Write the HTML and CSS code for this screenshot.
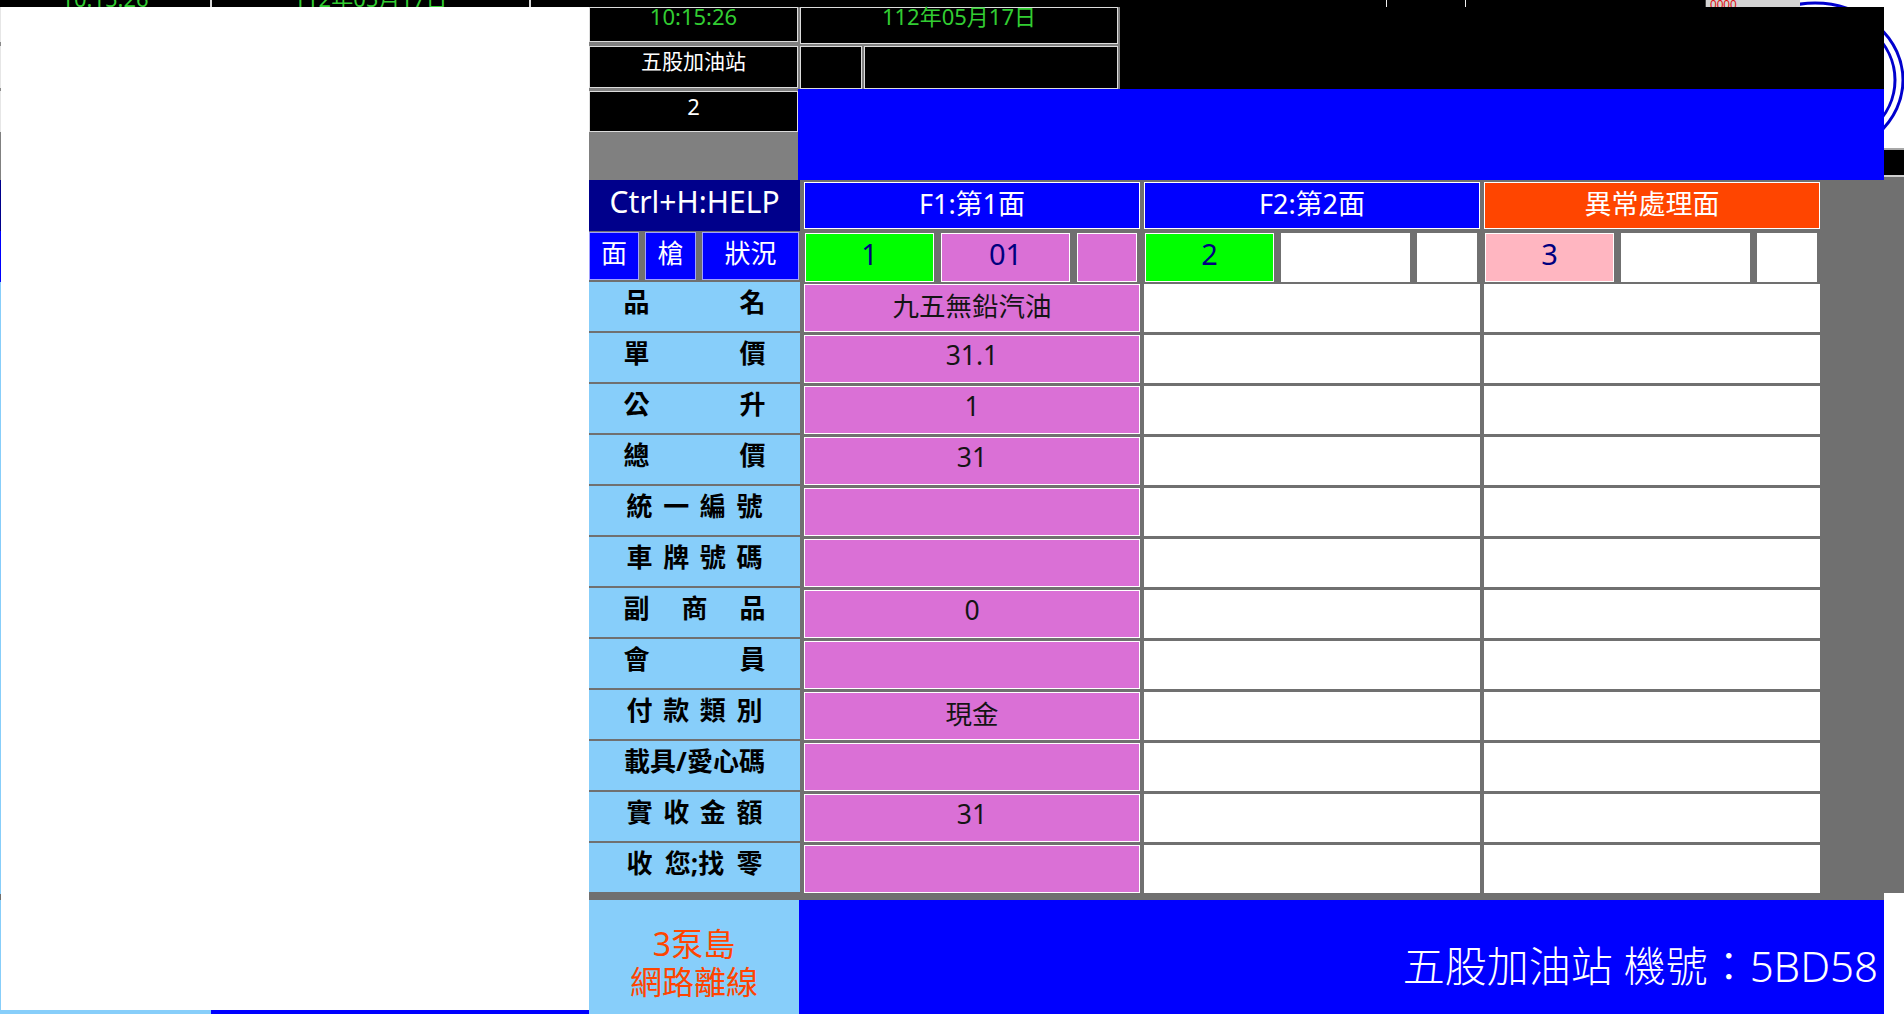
FILE: index.html
```html
<!DOCTYPE html>
<html lang="zh-Hant">
<head>
<meta charset="utf-8">
<title>加油站 POS</title>
<link rel="stylesheet" href="styles.css">
</head>
<body>
<div class="desk">

  <!-- window at the right edge (partly hidden) -->
  <div class="side-win">
    <div class="side-logo">
      <svg class="rings" width="104" height="148" viewBox="0 0 104 148">
        <ellipse cx="15" cy="80" rx="88" ry="77" fill="none" stroke="#0000cd" stroke-width="3"/>
        <ellipse cx="15" cy="80" rx="80" ry="69" fill="none" stroke="#0000cd" stroke-width="3"/>
      </svg>
    </div>
    <div class="side-line"></div>
    <div class="side-black"></div>
    <div class="side-sep"></div>
    <div class="side-grey"></div>
    <div class="side-white"></div>
  </div>

  <!-- background window top strip -->
  <div class="bg-top">
    <div class="bgc bgc-a"><span class="bg-green">10:15:26</span></div>
    <div class="bgd"></div>
    <div class="bgc bgc-b"><span class="bg-green">112年05月17日</span></div>
    <div class="bgd"></div>
    <div class="bgc bgc-c"></div>
    <div class="bgd thin"></div>
    <div class="bgc bgc-d"></div>
    <div class="bgd thin"></div>
    <div class="bgc bgc-e"></div>
    <div class="bgd thin dark"></div>
    <div class="bgc bgc-f"><span class="red-num">0000</span></div>
  </div>
  <div class="bg-left"></div>
  <div class="bg-bottom"><div class="bgb-a"></div><div class="bgb-b"></div></div>

  <!-- blank white window -->
  <div class="blank"></div>

  <!-- main POS window -->
  <div class="win">
    <div class="top">
      <div class="top-left">
        <div class="tcell time">10:15:26</div>
        <div class="tcell station">五股加油站</div>
        <div class="tcell num">2</div>
      </div>
      <div class="top-right">
        <div class="tr-upper">
          <div class="tgrid">
            <div class="tcell date">112年05月17日</div>
            <div class="tsub">
              <div class="tcell tsmall"></div>
              <div class="tcell twide"></div>
            </div>
          </div>
          <div class="tblack"></div>
        </div>
        <div class="tr-lower"></div>
      </div>
    </div>

    <div class="grid">
      <div class="help">Ctrl+H:HELP</div>
      <div class="face-h">F1:第1面</div>
      <div class="face-h">F2:第2面</div>
      <div class="face-h err">異常處理面</div>

      <div class="keys">
        <div class="key k1">面</div>
        <div class="key k2">槍</div>
        <div class="key k3">狀況</div>
      </div>
      <div class="subs">
        <div class="sub green">1</div>
        <div class="sub pink">01</div>
        <div class="sub pink"></div>
      </div>
      <div class="subs">
        <div class="sub green">2</div>
        <div class="sub white"></div>
        <div class="sub white"></div>
      </div>
      <div class="subs">
        <div class="sub lpink">3</div>
        <div class="sub white"></div>
        <div class="sub white"></div>
      </div>

      <div class="lab"><div class="lt"><span>品</span><span>名</span></div></div>
      <div class="val">九五無鉛汽油</div><div class="val w"></div><div class="val w"></div>

      <div class="lab"><div class="lt"><span>單</span><span>價</span></div></div>
      <div class="val">31.1</div><div class="val w"></div><div class="val w"></div>

      <div class="lab"><div class="lt"><span>公</span><span>升</span></div></div>
      <div class="val">1</div><div class="val w"></div><div class="val w"></div>

      <div class="lab"><div class="lt"><span>總</span><span>價</span></div></div>
      <div class="val">31</div><div class="val w"></div><div class="val w"></div>

      <div class="lab"><div class="lt lt4"><span>統</span><span>一</span><span>編</span><span>號</span></div></div>
      <div class="val"></div><div class="val w"></div><div class="val w"></div>

      <div class="lab"><div class="lt lt4"><span>車</span><span>牌</span><span>號</span><span>碼</span></div></div>
      <div class="val"></div><div class="val w"></div><div class="val w"></div>

      <div class="lab"><div class="lt"><span>副</span><span>商</span><span>品</span></div></div>
      <div class="val">0</div><div class="val w"></div><div class="val w"></div>

      <div class="lab"><div class="lt"><span>會</span><span>員</span></div></div>
      <div class="val"></div><div class="val w"></div><div class="val w"></div>

      <div class="lab"><div class="lt lt4"><span>付</span><span>款</span><span>類</span><span>別</span></div></div>
      <div class="val">現金</div><div class="val w"></div><div class="val w"></div>

      <div class="lab"><div class="lt ltn"><span>載具/愛心碼</span></div></div>
      <div class="val"></div><div class="val w"></div><div class="val w"></div>

      <div class="lab"><div class="lt lt4"><span>實</span><span>收</span><span>金</span><span>額</span></div></div>
      <div class="val">31</div><div class="val w"></div><div class="val w"></div>

      <div class="lab"><div class="lt lt4"><span>收</span><span>您;找</span><span>零</span></div></div>
      <div class="val"></div><div class="val w"></div><div class="val w"></div>
    </div>

    <div class="band"></div>

    <div class="bottom">
      <div class="island"><span class="island-text">3泵島<br>網路離線</span></div>
      <div class="status">五股加油站 機號：5BD58</div>
    </div>
  </div>
</div>
</body>
</html>
```

FILE: styles.css
```css
html, body {
  margin: 0;
  padding: 0;
  background: #ffffff;
  overflow: hidden;
}

.desk {
  position: relative;
  width: 1904px;
  height: 1014px;
  overflow: hidden;
  background: #ffffff;
  font-family: "Noto Sans", "Noto Sans CJK TC", sans-serif;
}

/* ---------- right side window ---------- */
.side-win {
  position: absolute;
  left: 1800px;
  top: 0;
  width: 104px;
  height: 1014px;
  display: flex;
  flex-direction: column;
  background: #ffffff;
}
.side-logo { height: 148px; background: #ffffff; }
.rings { display: block; }
.side-line { height: 2px; background: #a8a8a8; }
.side-black { height: 25px; background: #000000; }
.side-sep { height: 2px; background: #cfcfcf; }
.side-grey { height: 716px; background: #707070; }
.side-white { flex: 1; background: #ffffff; }

/* ---------- background window fragments ---------- */
.bg-top {
  position: absolute;
  left: 0;
  top: 0;
  width: 1800px;
  height: 9px;
  display: flex;
  overflow: hidden;
  background: #000;
}
.bgc {
  height: 9px;
  background: #000;
  overflow: hidden;
  text-align: center;
}
.bgc-a { width: 210px; }
.bgc-b { width: 317px; }
.bgc-c { width: 855px; }
.bgc-d { width: 78px; }
.bgc-e { width: 239px; }
.bgc-f { width: 94px; background: #d3d3d3; text-align: left; }
.bgd { width: 2px; height: 9px; background: #d8d8d8; }
.bgd.thin { width: 1px; background: #f0f0f0; }
.bgd.dark { background: #404040; }
.bg-green {
  display: block;
  color: #32cd32;
  font-size: 22px;
  line-height: 20px;
  margin-top: -12px;
}
.red-num {
  display: block;
  color: #e01010;
  font-family: "Liberation Sans Narrow", "Liberation Sans", sans-serif;
  font-size: 12px;
  line-height: 12px;
  padding-left: 4px;
  margin-top: -1px;
}

.bg-left {
  position: absolute;
  left: 0;
  top: 7px;
  width: 1px;
  height: 1007px;
  background: linear-gradient(to bottom,
    #e6e6e6 0, #e6e6e6 35px, #8a8a8a 35px, #8a8a8a 39px,
    #e6e6e6 39px, #e6e6e6 81px, #8a8a8a 81px, #8a8a8a 84px,
    #e6e6e6 84px, #e6e6e6 125px, #808080 125px, #808080 173px,
    #00008b 173px, #00008b 224px, #0000ff 224px, #0000ff 275px,
    #87cefa 275px, #87cefa 887px, #6e6e6e 887px, #6e6e6e 893px,
    #87cefa 893px);
}
.bg-bottom {
  position: absolute;
  left: 0;
  top: 1010px;
  width: 589px;
  height: 4px;
  display: flex;
}
.bgb-a { width: 211px; background: #87cefa; }
.bgb-b { flex: 1; background: #0000ff; }

/* ---------- blank white window ---------- */
.blank {
  position: absolute;
  left: 1px;
  top: 7px;
  width: 588px;
  height: 1003px;
  background: #ffffff;
}

/* ---------- main POS window ---------- */
.win {
  position: absolute;
  left: 589px;
  top: 7px;
  width: 1295px;
  height: 1007px;
  background: #707070;
  display: flex;
  flex-direction: column;
  font-family: "Noto Sans", "Noto Sans CJK TC", sans-serif;
}

.top {
  display: flex;
  height: 173px;
  flex: none;
}
.top-left {
  width: 209px;
  background: #808080;
  display: flex;
  flex-direction: column;
}
.tcell {
  box-sizing: border-box;
  background: #000000;
  border: 1px solid #dcdcdc;
  color: #ffffff;
  font-size: 22px;
  text-align: center;
}
.time {
  height: 35px;
  color: #32cd32;
  line-height: 16px;
  padding-top: 0;
}
.station {
  height: 42px;
  margin-top: 4px;
  font-size: 21px;
  line-height: 22px;
  padding-top: 3px;
}
.num {
  height: 41px;
  margin-top: 3px;
  line-height: 22px;
  padding-top: 3px;
}

.top-right {
  width: 1086px;
  display: flex;
  flex-direction: column;
}
.tr-upper {
  height: 82px;
  display: flex;
  background: #000000;
}
.tgrid {
  box-sizing: border-box;
  width: 322px;
  padding: 0 2px;
  background: #808080;
  display: flex;
  flex-direction: column;
}
.date {
  height: 37px;
  color: #32cd32;
  line-height: 16px;
}
.tsub {
  margin-top: 2px;
  flex: 1;
  display: flex;
  gap: 2px;
}
.tsmall { width: 62px; }
.twide { flex: 1; }
.tblack { flex: 1; background: #000000; }
.tr-lower { flex: 1; background: #0000ff; }

/* ---------- table ---------- */
.grid {
  flex: none;
  display: grid;
  grid-template-columns: 211px 336px 336px 336px;
  grid-template-rows: repeat(14, 51px);
  column-gap: 4px;
  background: #707070;
}
.help {
  background: #00008b;
  color: #ffffff;
  font-size: 30px;
  display: flex;
  align-items: center;
  justify-content: center;
  padding-bottom: 8px;
  box-sizing: border-box;
}
.face-h {
  margin: 2px 0;
  box-sizing: border-box;
  border: 1px solid #ffffff;
  background: #0000ff;
  color: #ffffff;
  font-size: 27px;
  display: flex;
  align-items: center;
  justify-content: center;
  padding-bottom: 6px;
}
.face-h.err { background: #ff4500; }

.keys {
  display: flex;
  gap: 6px;
  padding-right: 1px;
}
.key {
  box-sizing: border-box;
  margin: 1px 0 2px;
  background: #0000ff;
  border: 1px solid #a0a0ff;
  color: #ffffff;
  font-size: 26px;
  display: flex;
  align-items: center;
  justify-content: center;
  padding-bottom: 8px;
}
.k1 { width: 50px; }
.k2 { width: 51px; }
.k3 { flex: 1; }

.subs {
  display: grid;
  grid-template-columns: 129px 129px 1fr;
  gap: 7px;
  margin: 2px 3px 1px 1px;
}
.sub {
  box-sizing: border-box;
  border: 1px solid #ffffff;
  color: #000080;
  font-size: 29px;
  display: flex;
  align-items: center;
  justify-content: center;
  padding-bottom: 8px;
}
.sub.green { background: #00ff00; }
.sub.pink { background: #da70d6; }
.sub.lpink { background: #ffb6c1; }
.sub.white { background: #ffffff; }

.lab {
  margin-bottom: 2px;
  background: #87cefa;
  color: #000000;
  font-size: 26px;
  font-weight: 700;
  display: flex;
  align-items: center;
  justify-content: center;
  padding-bottom: 10px;
  box-sizing: border-box;
}
.lt {
  width: 142px;
  display: flex;
  justify-content: space-between;
  line-height: 1;
}
.lt4 { width: 136px; }
.ltn { width: auto; }

.val {
  margin: 2px 0 1px;
  box-sizing: border-box;
  border: 1px solid #ffffff;
  background: #da70d6;
  color: #141414;
  font-size: 26.5px;
  display: flex;
  align-items: center;
  justify-content: center;
  padding-bottom: 8px;
}
.val.w { background: #ffffff; }

.band {
  flex: none;
  height: 6px;
  background: #707070;
}

.bottom {
  flex: 1;
  display: flex;
}
.island {
  width: 210px;
  background: #87cefa;
  color: #ff4500;
  display: flex;
  align-items: center;
  justify-content: center;
  padding-top: 12px;
  box-sizing: border-box;
}
.island-text {
  font-size: 32px;
  line-height: 38px;
  text-align: center;
}
.status {
  flex: 1;
  background: #0000ff;
  color: #ffffff;
  font-size: 42px;
  font-weight: 300;
  display: flex;
  align-items: center;
  justify-content: flex-end;
  padding: 12px 6px 0 0;
  white-space: nowrap;
  overflow: hidden;
}
```
